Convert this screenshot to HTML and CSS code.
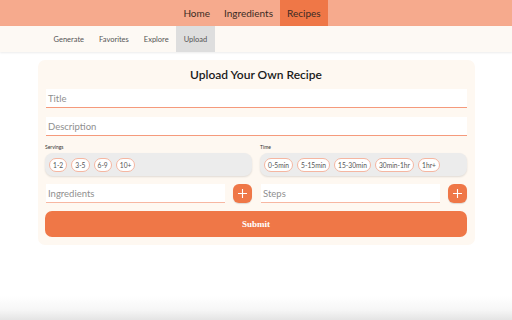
FILE: index.html
```html
<!DOCTYPE html>
<html>
<head>
<meta charset="utf-8">
<link rel="stylesheet" href="styles.css">
</head>
<body>
<nav class="topnav">
  <a class="top-item">Home</a>
  <a class="top-item">Ingredients</a>
  <a class="top-item active">Recipes</a>
</nav>
<nav class="subnav">
  <a class="sub-item">Generate</a>
  <a class="sub-item">Favorites</a>
  <a class="sub-item">Explore</a>
  <a class="sub-item active">Upload</a>
</nav>
<main class="page">
  <form class="card">
    <h1 class="card-title">Upload Your Own Recipe</h1>
    <div class="field"><span class="placeholder">Title</span></div>
    <div class="field"><span class="placeholder">Description</span></div>
    <div class="pick-row">
      <div class="pick-group">
        <div class="pick-label">Servings</div>
        <div class="pills">
          <span class="pill">1-2</span>
          <span class="pill">3-5</span>
          <span class="pill">6-9</span>
          <span class="pill">10+</span>
        </div>
      </div>
      <div class="pick-group">
        <div class="pick-label">Time</div>
        <div class="pills">
          <span class="pill">0-5min</span>
          <span class="pill">5-15min</span>
          <span class="pill">15-30min</span>
          <span class="pill">30min-1hr</span>
          <span class="pill">1hr+</span>
        </div>
      </div>
    </div>
    <div class="add-row">
      <div class="add-group">
        <div class="field small"><span class="placeholder">Ingredients</span></div>
        <button type="button" class="plus"><svg width="11" height="11" viewBox="0 0 11 11"><path d="M5.5 1v9M1 5.5h9" stroke="#fff" stroke-width="1.1" fill="none"/></svg></button>
      </div>
      <div class="add-group">
        <div class="field small"><span class="placeholder">Steps</span></div>
        <button type="button" class="plus"><svg width="11" height="11" viewBox="0 0 11 11"><path d="M5.5 1v9M1 5.5h9" stroke="#fff" stroke-width="1.1" fill="none"/></svg></button>
      </div>
    </div>
    <button type="button" class="submit">Submit</button>
  </form>
</main>
</body>
</html>
```
FILE: styles.css
```css
html {
  height: 100%;
  background: linear-gradient(to bottom, #ffffff calc(100% - 24px), #f6f6f6 calc(100% - 10px), #e4e4e4 100%);
}
body {
  margin: 0;
  font-family: Lato, "Open Sans", sans-serif;
  color: #222;
}
.topnav {
  display: flex;
  justify-content: center;
  padding-right: 8px;
  height: 26px;
  background: #f6aa8d;
}
.top-item {
  display: flex;
  align-items: center;
  padding: 0 7px;
  font-size: 10px;
  color: #3a2a24;
}
.top-item.active {
  background: #ef7747;
}
.subnav {
  display: flex;
  height: 26px;
  padding-left: 46px;
  background: #fdf9f4;
  box-shadow: 0 1px 2px rgba(0, 0, 0, 0.08);
  position: relative;
}
.sub-item {
  display: flex;
  align-items: center;
  padding: 0 7.5px;
  font-size: 7.5px;
  color: #555;
}
.sub-item.active {
  background: #dedede;
}
.page {
  padding: 8px 37px 0 38px;
}
.card {
  background: #fef8f1;
  border-radius: 7px;
  padding: 6px 8px 8px 7px;
  display: flex;
  flex-direction: column;
}
.card-title {
  margin: 0 0 6px;
  text-align: center;
  font-size: 12px;
  font-weight: 600;
  line-height: 17px;
  color: #1a1a1a;
}
.field {
  background: #fff;
  height: 18px;
  border-bottom: 1px solid #f59a7c;
  margin: 0 0 9px 1px;
  display: flex;
  align-items: center;
  padding-left: 2px;
}
.placeholder {
  font-size: 9.5px;
  color: #8f8f8f;
}
.pick-row {
  display: flex;
  gap: 8px;
  margin-top: -2px;
}
.pick-group {
  flex: 1;
  display: flex;
  flex-direction: column;
}
.pick-label {
  font-size: 5px;
  line-height: 8px;
  color: #333;
  margin-bottom: 2px;
}
.pills {
  display: flex;
  gap: 4px;
  align-items: center;
  height: 23px;
  padding: 0 4px;
  background: #ececec;
  border-radius: 8px;
  box-shadow: 0 1px 2px rgba(0, 0, 0, 0.12);
}
.pill {
  height: 12px;
  line-height: 12px;
  padding: 0 3px;
  border: 1px solid #f5b6a1;
  border-radius: 7px;
  background: #fff;
  font-size: 6.7px;
  color: #555;
}
.add-row {
  display: flex;
  gap: 8px;
  margin-top: 8px;
}
.add-group {
  flex: 1;
  display: flex;
  gap: 8px;
  align-items: flex-start;
}
.field.small {
  flex: 1;
  margin-bottom: 0;
  border-bottom-color: #f7b7a2;
}
.plus {
  width: 19px;
  height: 19px;
  border: none;
  padding: 0;
  border-radius: 6px;
  background: #ef7747;
  display: flex;
  align-items: center;
  justify-content: center;
  box-shadow: 0 1px 1px rgba(0, 0, 0, 0.12);
}
.submit {
  margin-top: 8px;
  height: 26px;
  border: none;
  border-radius: 7px;
  background: #ef7747;
  color: #fff;
  font-family: "Liberation Serif", serif;
  font-weight: bold;
  font-size: 9px;
}
```
